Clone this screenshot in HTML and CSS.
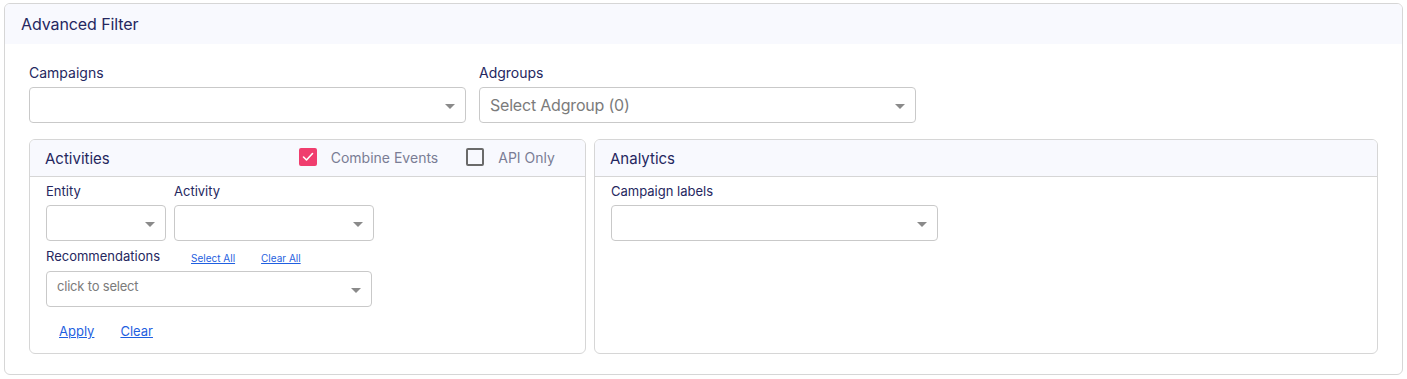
FILE: index.html
```html
<!DOCTYPE html>
<html>
<head>
    <title>Advanced Filter</title>
    <link rel="stylesheet" href="styles.css">
</head>
<body>
    <div class="filter-card">
        <div class="filter-header">Advanced Filter</div>
        <div class="filter-body">
            <div class="top-row">
                <div class="field field-wide">
                    <label>Campaigns</label>
                    <div class="select-box"><span></span><span class="caret"></span></div>
                </div>
                <div class="field field-wide">
                    <label>Adgroups</label>
                    <div class="select-box big"><span class="placeholder">Select Adgroup (0)</span><span class="caret"></span></div>
                </div>
            </div>

            <div class="panels">
                <div class="panel activities">
                    <div class="panel-header">
                        <span class="panel-title">Activities</span>
                        <div class="checks">
                            <label class="check-item">
                                <span class="checkbox checked">
                                    <svg width="12" height="10" viewBox="0 0 12 10"><polyline points="1.5,5 4.5,8 10.5,1.5" fill="none" stroke="#fff" stroke-width="1.6" stroke-linecap="round" stroke-linejoin="round"/></svg>
                                </span>
                                Combine Events
                            </label>
                            <label class="check-item">
                                <span class="checkbox"></span>
                                API Only
                            </label>
                        </div>
                    </div>
                    <div class="panel-body">
                        <div class="inline-row">
                            <div class="field entity">
                                <label class="small-label">Entity</label>
                                <div class="select-box"><span></span><span class="caret"></span></div>
                            </div>
                            <div class="field activity">
                                <label class="small-label">Activity</label>
                                <div class="select-box"><span></span><span class="caret"></span></div>
                            </div>
                        </div>
                        <div class="field recs">
                            <div class="label-row">
                                <label class="small-label">Recommendations</label>
                                <a href="#" class="mini-link">Select All</a>
                                <a href="#" class="mini-link">Clear All</a>
                            </div>
                            <div class="select-box"><span class="placeholder small">click to select</span><span class="caret"></span></div>
                        </div>
                        <div class="actions">
                            <a href="#" class="action-link">Apply</a>
                            <a href="#" class="action-link">Clear</a>
                        </div>
                    </div>
                </div>

                <div class="panel analytics">
                    <div class="panel-header">
                        <span class="panel-title">Analytics</span>
                    </div>
                    <div class="panel-body">
                        <div class="field labels">
                            <label class="small-label">Campaign labels</label>
                            <div class="select-box"><span></span><span class="caret"></span></div>
                        </div>
                    </div>
                </div>
            </div>
        </div>
    </div>
</body>
</html>
```

FILE: styles.css
```css
* {
    margin: 0;
    padding: 0;
    box-sizing: border-box;
}

body {
    font-family: 'Inter', 'Liberation Sans', sans-serif;
    background: #fff;
    color: #252760;
    padding: 3px 4px;
}

.filter-card {
    width: 1399px;
    height: 372px;
    border: 1px solid #d6d6d6;
    border-radius: 6px;
    overflow: hidden;
}

.filter-header {
    height: 40px;
    background: #f8f9fe;
    padding: 0 16px;
    display: flex;
    align-items: center;
    font-size: 16px;
    color: #252760;
    letter-spacing: -0.1px;
}

.filter-body {
    padding: 20px 24px 0 24px;
}

.top-row {
    display: flex;
    gap: 13px;
}

.field label {
    display: block;
    font-size: 14px;
    line-height: 17px;
    margin-bottom: 6px;
    color: #252760;
}

.field-wide {
    width: 437px;
}

.select-box {
    height: 36px;
    border: 1px solid #c9c9c9;
    border-radius: 4px;
    background: #fff;
    display: flex;
    align-items: center;
    justify-content: space-between;
    padding: 0 10px;
}

.caret {
    width: 0;
    height: 0;
    border-left: 5px solid transparent;
    border-right: 5px solid transparent;
    border-top: 5px solid #8a8a8a;
    margin-top: 2px;
}

.placeholder {
    color: #7b7b7b;
    font-size: 16px;
    letter-spacing: -0.2px;
}

.placeholder.small {
    font-size: 13px;
    margin-top: -6px;
}

.panels {
    display: flex;
    gap: 8px;
    margin-top: 16px;
}

.panel {
    height: 215px;
    border: 1px solid #d6d6d6;
    border-radius: 6px;
    overflow: hidden;
}

.activities {
    width: 557px;
}

.analytics {
    flex: 1;
}

.panel-header {
    height: 37px;
    background: #f8f9fe;
    border-bottom: 1px solid #d6d6d6;
    display: flex;
    align-items: center;
    padding: 0 15px;
}

.panel-title {
    font-size: 15px;
    color: #252760;
}

.checks {
    display: flex;
    margin-left: 189px;
    gap: 28px;
}

.check-item {
    display: flex;
    align-items: center;
    gap: 14px;
    font-size: 14px;
    color: #7a7d95;
    margin-top: -2px;
}

.checkbox {
    width: 18px;
    height: 18px;
    border: 2px solid #6a6a6a;
    border-radius: 2px;
    display: flex;
    align-items: center;
    justify-content: center;
}

.checkbox.checked {
    background: #f03d6e;
    border-color: #f03d6e;
}

.panel-body {
    padding: 6px 16px 0 16px;
}

.small-label {
    font-size: 13px !important;
    line-height: 16px !important;
    margin-bottom: 6px !important;
}

.inline-row {
    display: flex;
    gap: 8px;
}

.entity {
    width: 120px;
}

.activity {
    width: 200px;
}

.recs {
    width: 326px;
    margin-top: 8px;
}

.label-row {
    display: flex;
    align-items: flex-start;
    margin-bottom: 7px;
}

.label-row .small-label {
    margin-bottom: 0 !important;
    margin-top: -1px;
}

.mini-link {
    font-size: 10px;
    color: #1f5fe0;
    margin-top: 3px;
}

.mini-link:first-of-type {
    margin-left: 31px;
}

.mini-link + .mini-link {
    margin-left: 26px;
}

.actions {
    display: flex;
    gap: 26px;
    padding-left: 13px;
    margin-top: 16px;
}

.action-link {
    font-size: 13px;
    color: #1f5fe0;
}

.labels {
    width: 327px;
}
```
